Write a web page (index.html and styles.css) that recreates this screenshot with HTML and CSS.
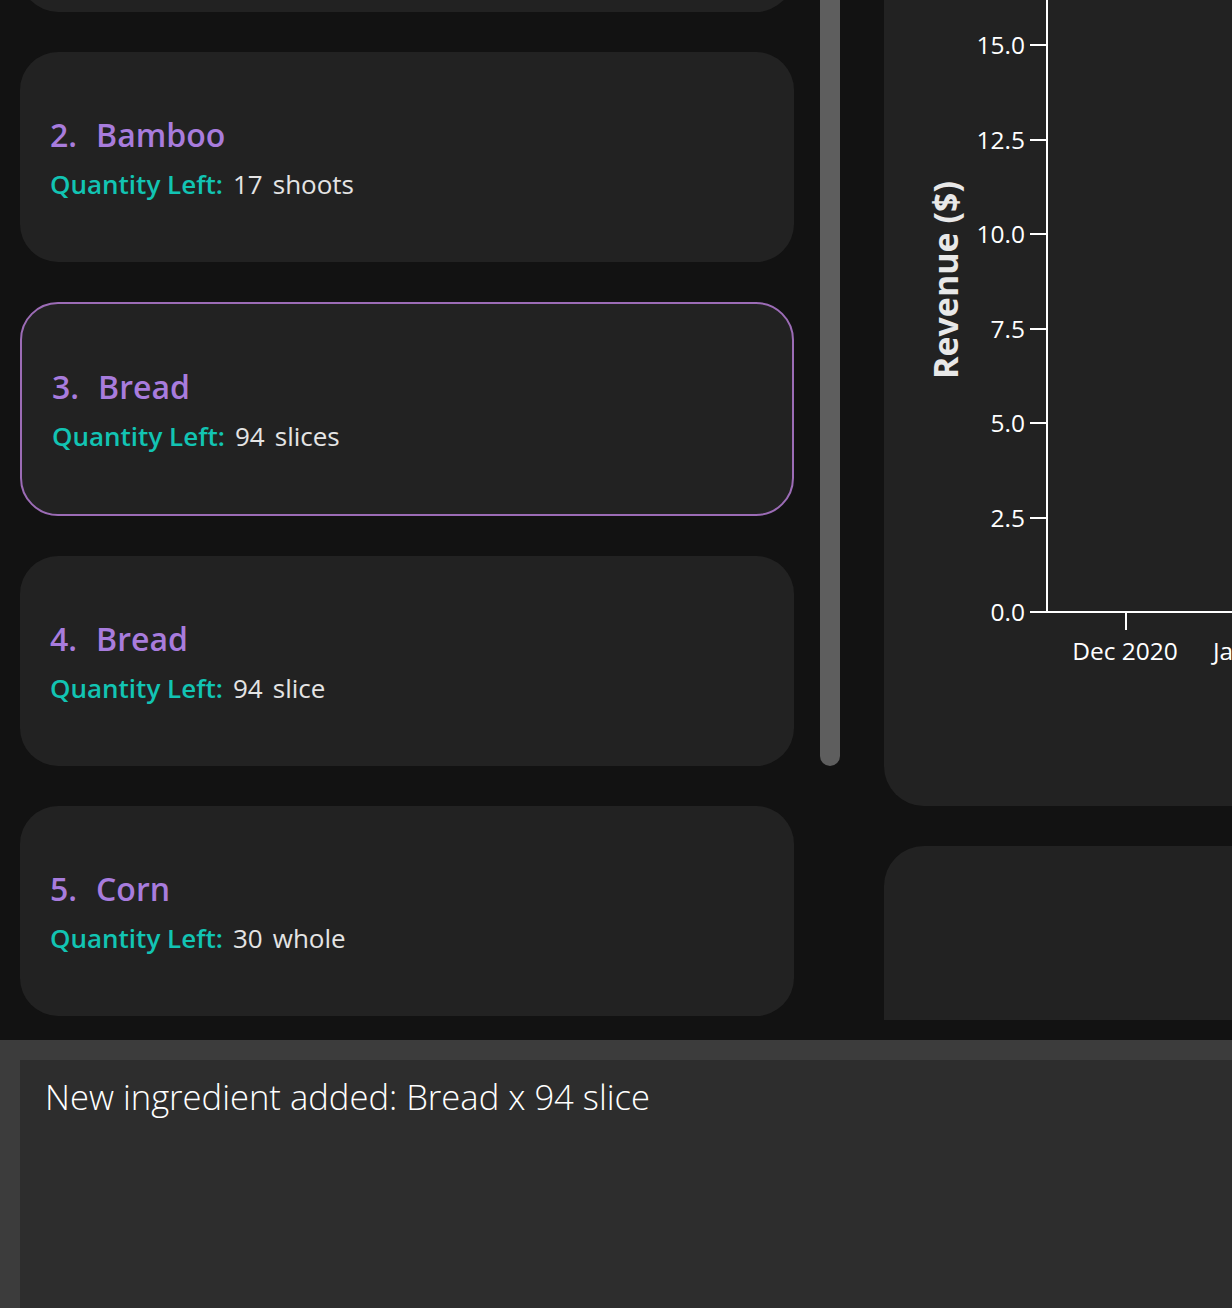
FILE: index.html
```html
<!DOCTYPE html>
<html lang="en">
<head>
<meta charset="utf-8">
<title>Inventory</title>
<link rel="stylesheet" href="styles.css">
</head>
<body>
<div class="top">
  <div class="list-pane">
    <div class="list">
      <div class="card"></div>
      <div class="card">
        <div class="title"><span>2.</span><span>Bamboo</span></div>
        <div class="qty"><span class="qlabel">Quantity Left:</span><span>17</span><span>shoots</span></div>
      </div>
      <div class="card selected">
        <div class="title"><span>3.</span><span>Bread</span></div>
        <div class="qty"><span class="qlabel">Quantity Left:</span><span>94</span><span>slices</span></div>
      </div>
      <div class="card">
        <div class="title"><span>4.</span><span>Bread</span></div>
        <div class="qty"><span class="qlabel">Quantity Left:</span><span>94</span><span>slice</span></div>
      </div>
      <div class="card">
        <div class="title"><span>5.</span><span>Corn</span></div>
        <div class="qty"><span class="qlabel">Quantity Left:</span><span>30</span><span>whole</span></div>
      </div>
    </div>
  </div>
  <div class="scroll-track"><div class="scroll-thumb"></div></div>
  <div class="right-col">
    <div class="chart-panel">
      <svg class="chart" width="348" height="806" viewBox="0 0 348 806">
        <g class="axis" stroke="#ffffff" stroke-width="2" fill="none">
          <line x1="163" y1="0" x2="163" y2="613"/>
          <line x1="146" y1="612" x2="348" y2="612"/>
          <line x1="146" y1="45" x2="163" y2="45"/>
          <line x1="146" y1="140" x2="163" y2="140"/>
          <line x1="146" y1="234" x2="163" y2="234"/>
          <line x1="146" y1="329" x2="163" y2="329"/>
          <line x1="146" y1="423" x2="163" y2="423"/>
          <line x1="146" y1="518" x2="163" y2="518"/>
          <line x1="242" y1="612" x2="242" y2="630"/>
        </g>
        <g class="ticks" text-anchor="end">
          <text x="141" y="54">15.0</text>
          <text x="141" y="149">12.5</text>
          <text x="141" y="243">10.0</text>
          <text x="141" y="338">7.5</text>
          <text x="141" y="432">5.0</text>
          <text x="141" y="527">2.5</text>
          <text x="141" y="621">0.0</text>
        </g>
        <g class="ticks">
          <text x="241" y="660" text-anchor="middle">Dec 2020</text>
          <text x="329" y="660">Jan 2021</text>
        </g>
        <text class="ylabel" transform="translate(74 280) rotate(-90)" text-anchor="middle">Revenue ($)</text>
      </svg>
    </div>
    <div class="panel2"></div>
  </div>
</div>
<div class="bottom">
  <div class="result">New ingredient added: Bread x 94 slice</div>
</div>
</body>
</html>
```
FILE: styles.css
```css
html, body {
  margin: 0;
  padding: 0;
}
body {
  width: 1232px;
  height: 1308px;
  overflow: hidden;
  background: #121212;
  font-family: "Open Sans", "Noto Sans", sans-serif;
}
.top {
  display: flex;
  height: 1040px;
  overflow: hidden;
}
.list-pane {
  width: 774px;
  padding-left: 20px;
  flex-shrink: 0;
}
.list {
  display: flex;
  flex-direction: column;
  gap: 40px;
  margin-top: -198px;
}
.card {
  box-sizing: border-box;
  height: 210px;
  background: #222222;
  border-radius: 38px;
  padding: 0 30px;
  display: flex;
  flex-direction: column;
  justify-content: center;
  gap: 10px;
}
.card.selected {
  height: 214px;
  border: 2px solid #9c6cb6;
}
.title {
  display: flex;
  gap: 19px;
  font-size: 32px;
  font-weight: 600;
  color: #a87cdd;
}
.qty {
  display: flex;
  gap: 10px;
  font-size: 26px;
  color: #e4e4e4;
}
.qlabel {
  font-weight: 600;
  color: #12c4b3;
}
.scroll-track {
  width: 20px;
  margin-left: 26px;
  flex-shrink: 0;
}
.scroll-thumb {
  height: 766px;
  background: #5e5e5e;
  border-radius: 0 0 10px 10px;
}
.right-col {
  margin-left: 44px;
  width: 700px;
  flex-shrink: 0;
  display: flex;
  flex-direction: column;
  gap: 40px;
  padding-bottom: 20px;
}
.chart-panel {
  height: 806px;
  background: #222222;
  border-radius: 0 0 40px 40px;
  flex-shrink: 0;
}
.chart {
  display: block;
}
.ticks text {
  font-family: "Open Sans", sans-serif;
  font-size: 24.5px;
  fill: #ffffff;
}
.ylabel {
  font-family: "Open Sans", sans-serif;
  font-size: 34px;
  font-weight: 700;
  fill: #e8e8e8;
}
.panel2 {
  flex: 1;
  background: #222222;
  border-radius: 40px 0 0 0;
}
.bottom {
  height: 268px;
  box-sizing: border-box;
  background: #3c3c3c;
  padding: 20px 0 0 20px;
}
.result {
  height: 100%;
  background: #2d2d2d;
  box-sizing: border-box;
  padding: 13px 25px;
  font-size: 34.6px;
  font-weight: 300;
  color: #ffffff;
}
```
